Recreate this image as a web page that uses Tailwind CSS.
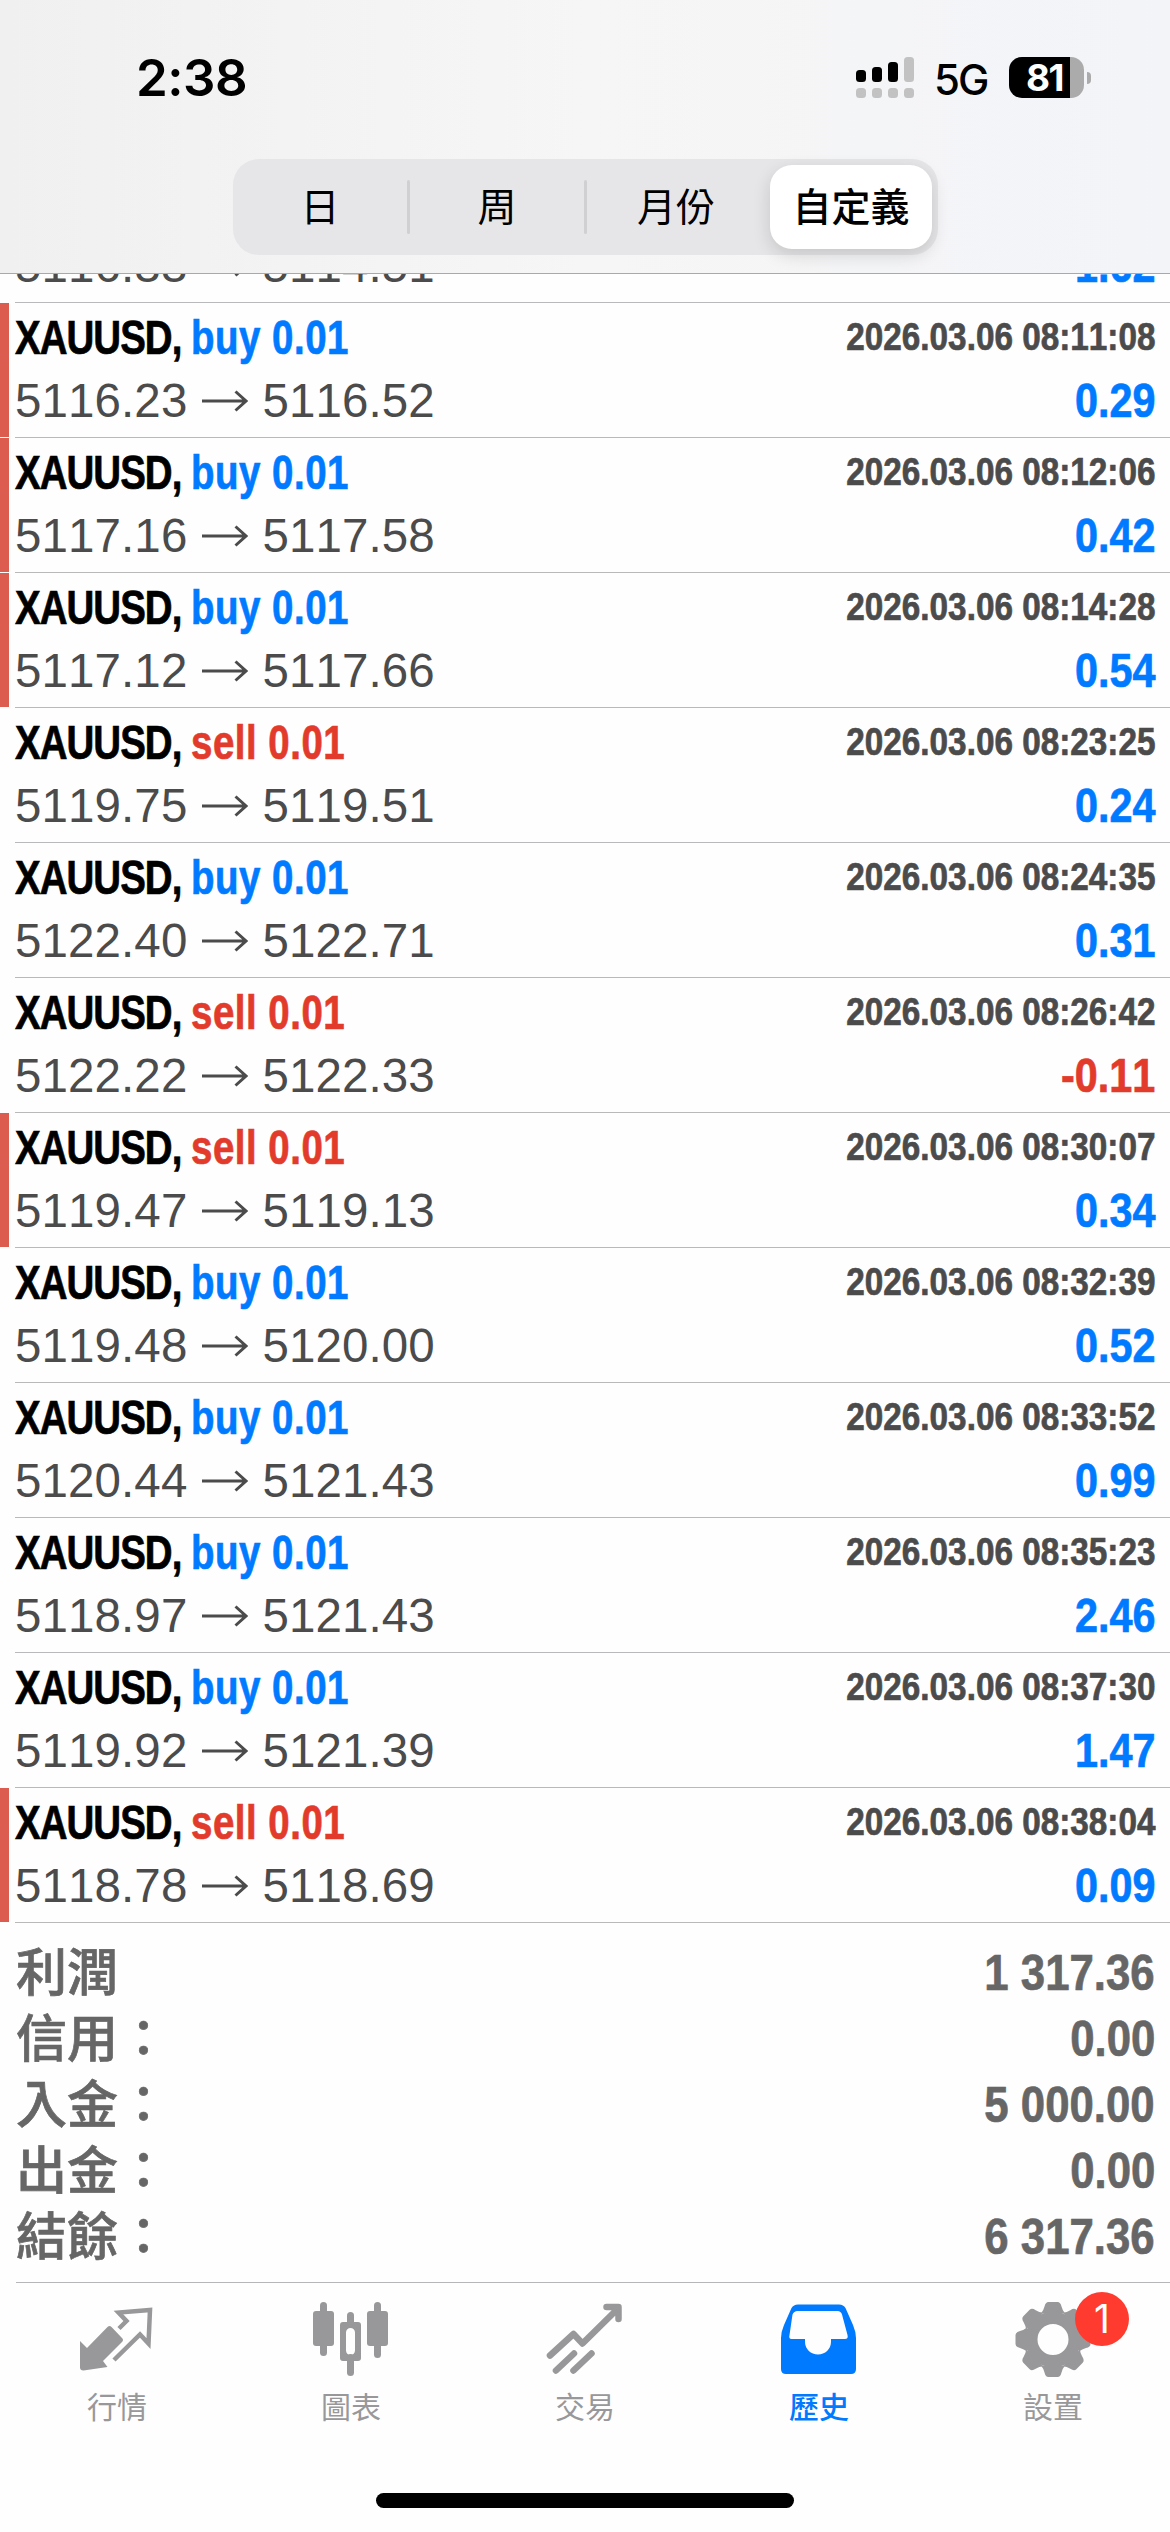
<!DOCTYPE html>
<html lang="zh-Hant">
<head>
<meta charset="utf-8">
<title>歷史</title>
<script src="https://cdn.jsdelivr.net/npm/@tailwindcss/browser@4"></script>
</head>
<body class="w-[1170px] h-[2532px] overflow-hidden bg-[#fefefe] flex flex-col font-['Liberation_Sans','Noto_Sans_CJK_TC',sans-serif]">

<header class="h-[274px] shrink-0 relative z-10 border-b border-[#a9a9aa] bg-linear-to-r from-[#f0f0f1] via-[#f7f6f6] to-[#f2f4f8] flex flex-col">
  <div class="h-[159px] shrink-0 flex items-start justify-between pl-[136px] pr-[79px] font-['Inter',sans-serif] text-black">
    <span class="mt-[47px] text-[51px] leading-[62px] font-semibold tracking-[-0.5px]">2:38</span>
    <div class="mt-[57px] flex items-start">
      <svg class="w-[60px] h-[42px]" viewBox="0 0 60 42">
        <g fill="#000"><rect x="0" y="13" width="10" height="12" rx="3.5"/><rect x="16" y="10" width="10" height="15" rx="3.5"/><rect x="32" y="5" width="10" height="20" rx="3.5"/></g>
        <g fill="#c2c2c3"><rect x="48" y="0" width="10" height="25" rx="3.5"/><rect x="0" y="31" width="10" height="10" rx="3.5"/><rect x="16" y="31" width="10" height="10" rx="3.5"/><rect x="32" y="31" width="10" height="10" rx="3.5"/><rect x="48" y="31" width="10" height="10" rx="3.5"/></g>
      </svg>
      <span class="ml-[18px] w-[56px] mt-[-3px] text-[42px] leading-[52px] font-medium tracking-[-2px] whitespace-nowrap">5G</span>
      <div class="ml-[19px] w-[75px] h-[41px] rounded-[13px] bg-linear-to-r from-black from-[82%] to-[#ababac] to-[82%] flex items-center justify-center pr-[4px]">
        <span class="text-white text-[37px] leading-[41px] font-bold tracking-[-1.5px]">81</span>
      </div>
      <div class="ml-[3px] mt-[15px] w-[4px] h-[12px] rounded-r-full bg-[#ababac]"></div>
    </div>
  </div>
  <div class="ml-[233px] w-[705px] h-[96px] rounded-[26px] bg-[#e6e5e7] flex items-center text-[39px] text-black">
    <span class="w-[174px] text-center pt-[2px]">日</span>
    <span class="w-[3px] h-[54px] rounded-full bg-[#d0d0d2]"></span>
    <span class="w-[174px] text-center pt-[2px]">周</span>
    <span class="w-[3px] h-[54px] rounded-full bg-[#d0d0d2]"></span>
    <span class="w-[178px] text-center pt-[2px]">月份</span>
    <span class="ml-[5px] w-[162px] h-[84px] leading-[86px] rounded-[22px] bg-white shadow-[0_6px_18px_rgba(0,0,0,0.14)] text-center font-medium">自定義</span>
  </div>
</header>

<main id="list" class="mt-[-106px] h-[1755px] shrink-0"></main>

<section class="h-[359px] shrink-0 pt-[17px] pl-[16px] pr-[15px] text-[#666667] font-bold" id="summary"></section>

<nav class="relative z-10 h-[249px] shrink-0 bg-[#fefefe] flex flex-col">
  <div class="ml-[16px] h-[1px] bg-[#b6b6b8]"></div>
  <div class="grid grid-cols-5 text-[#98989a] text-[30px] leading-[42px]">
    <div class="flex flex-col items-center">
      <svg class="w-[90px] h-[104px]" viewBox="72 2283 90 104">
        <path d="M80 2341l7 7 20.500-21q2-2 4 0l10.500 11q2 2 0 4l-19 19 4.500 6-24 3.500q-3.500 0-3.500-3z" fill="currentColor"/>
        <path d="M119 2328.500l7.500-7.500-8-8.500 31.500-2.500-1.500 33.500-8.500-9L114 2360" fill="none" stroke="currentColor" stroke-width="4.500"/>
      </svg><span>行情</span>
    </div>
    <div class="flex flex-col items-center">
      <svg class="w-[90px] h-[104px]" viewBox="306 2283 90 104">
        <g fill="currentColor"><rect x="313" y="2311" width="21" height="35" rx="3"/><rect x="320" y="2302" width="7" height="54" rx="3.500"/><rect x="367" y="2311" width="21" height="35" rx="3"/><rect x="374" y="2302" width="7" height="56" rx="3.500"/><rect x="347" y="2312" width="7" height="16" rx="3.500"/><rect x="347" y="2354" width="7" height="22" rx="3.500"/>
        <path fill-rule="evenodd" d="M343 2322h15a3 3 0 0 1 3 3v33a3 3 0 0 1-3 3h-15a3 3 0 0 1-3-3v-33a3 3 0 0 1 3-3zM350.500 2328a4.500 4.500 0 0 0-4.500 4.500v18a4.500 4.500 0 0 0 9 0v-18a4.500 4.500 0 0 0-4.500-4.500z"/></g>
      </svg><span>圖表</span>
    </div>
    <div class="flex flex-col items-center">
      <svg class="w-[90px] h-[104px]" viewBox="540 2283 90 104" fill="none" stroke="currentColor" stroke-width="6.500" stroke-linecap="round" stroke-linejoin="round">
        <path d="M550 2355.500L573.500 2334L582.500 2343.500L617 2309.500M606.500 2307H618.500V2319M556 2370.500L574 2353.500M573.500 2370.500L591.500 2353.500"/>
      </svg><span>交易</span>
    </div>
    <div class="flex flex-col items-center text-[#007aff] font-medium">
      <svg class="w-[90px] h-[104px]" viewBox="774 2283 90 104">
        <path fill="currentColor" fill-rule="evenodd" d="M798 2304.500H839Q843.500 2304.500 845.500 2308L853 2325Q856 2332 856 2338V2369Q856 2374 851 2374H786Q781 2374 781 2369V2338Q781 2332 784 2325L791.500 2308Q793.500 2304.500 798 2304.500zM797.500 2311Q794 2311 792.500 2314.500L789.500 2335Q788.500 2339 791.500 2339H805V2342C805 2349 811 2354.500 818 2354.500S831 2349 831 2342V2339H845Q848.500 2339 847.500 2335L842 2314.500Q841 2311 837.500 2311z"/>
      </svg><span>歷史</span>
    </div>
    <div class="relative flex flex-col items-center">
      <svg class="w-[90px] h-[104px]" viewBox="-45 -56.500 90 104">
        <g fill="currentColor">
          <g id="teeth">
            <path id="tooth" d="M-12 -26Q-9.500 -29 -8.500 -33Q-7.500 -37.500 -4.500 -37.500H4.500Q7.500 -37.500 8.500 -33Q9.500 -29 12 -26z"/>
            <use href="#tooth" transform="rotate(90)"/>
            <use href="#tooth" transform="rotate(180)"/>
            <use href="#tooth" transform="rotate(270)"/>
          </g>
          <use href="#teeth" transform="rotate(45)"/>
          <path fill-rule="evenodd" d="M0-28A28 28 0 0 1 0 28A28 28 0 0 1 0-28zM0-15.500A15.500 15.500 0 0 0 0 15.500A15.500 15.500 0 0 0 0-15.500z"/>
        </g>
      </svg><span>設置</span>
      <span class="absolute left-[139px] top-[9px] size-[54px] rounded-full bg-[#ff3b30] text-white text-[39px] leading-[54px] text-center font-['Inter',sans-serif]">1</span>
    </div>
  </div>
  <div class="mt-[64px] self-center w-[418px] h-[15px] rounded-full bg-black"></div>
</nav>

<script>
const rows = [
  ['','5116.33','5114.51','','1.62',0],
  ['buy','5116.23','5116.52','2026.03.06 08:11:08','0.29',1],
  ['buy','5117.16','5117.58','2026.03.06 08:12:06','0.42',1],
  ['buy','5117.12','5117.66','2026.03.06 08:14:28','0.54',1],
  ['sell','5119.75','5119.51','2026.03.06 08:23:25','0.24',0],
  ['buy','5122.40','5122.71','2026.03.06 08:24:35','0.31',0],
  ['sell','5122.22','5122.33','2026.03.06 08:26:42','-0.11',0],
  ['sell','5119.47','5119.13','2026.03.06 08:30:07','0.34',1],
  ['buy','5119.48','5120.00','2026.03.06 08:32:39','0.52',0],
  ['buy','5120.44','5121.43','2026.03.06 08:33:52','0.99',0],
  ['buy','5118.97','5121.43','2026.03.06 08:35:23','2.46',0],
  ['buy','5119.92','5121.39','2026.03.06 08:37:30','1.47',0],
  ['sell','5118.78','5118.69','2026.03.06 08:38:04','0.09',1]
];
document.getElementById('list').innerHTML = rows.map(([side, open, close, time, profit, marked]) => `
  <div class="h-[135px] flex [font-kerning:none]">
    <div class="w-[9px] h-[134px] ${marked ? 'bg-[#dd5c50]' : ''}"></div>
    <div class="ml-[6px] flex-1 pr-[15px] border-b border-[#b9b9bb] flex flex-col pt-[7px]">
      <div class="h-[62px] flex justify-between whitespace-nowrap font-bold [-webkit-text-stroke:0.7px_currentColor]">
        ${side ? `<div class="origin-left scale-x-[0.81] text-[47.5px] leading-[56px] text-black"><span class="tracking-[-1.2px]">XAUUSD, </span><span class="tracking-[0.6px] ${side === 'buy' ? 'text-[#007aff]' : 'text-[#e23b2c]'}">${side} 0.01</span></div>
        <div class="origin-right scale-x-[0.865] text-[38.5px] leading-[54px] text-[#4b4b4c]">${time}</div>` : ''}
      </div>
      <div class="h-[62px] flex justify-between whitespace-nowrap text-[47.5px] leading-[58px]">
        <div class="flex text-[#4b4b4c]"><span class="tracking-[0.1px]">${open}</span><svg class="mx-[14px] mt-[18px] w-[47px] h-[22px]" viewBox="0 0 47 22" fill="none" stroke="currentColor" stroke-width="3"><path d="M1 11H45M34.500 1.500L45 11L34.500 20.500"/></svg><span class="tracking-[0.1px]">${close}</span></div>
        <div class="origin-right scale-x-[0.87] font-bold [-webkit-text-stroke:0.7px_currentColor] ${profit[0] === '-' ? 'text-[#e23b2c]' : 'text-[#007aff]'}">${profit}</div>
      </div>
    </div>
  </div>`).join('');

const totals = [['利潤','1 317.36'],['信用：','0.00'],['入金：','5 000.00'],['出金：','0.00'],['結餘：','6 317.36']];
document.getElementById('summary').innerHTML = totals.map(([label, value]) => `
  <div class="h-[66px] flex justify-between items-center whitespace-nowrap [-webkit-text-stroke:0.7px_currentColor]">
    <span class="text-[51px] leading-[66px] pt-[2px] font-medium">${label}</span>
    <span class="origin-right scale-x-[0.875] text-[50px] leading-[66px] [font-kerning:none]">${value}</span>
  </div>`).join('');
</script>
</body>
</html>
